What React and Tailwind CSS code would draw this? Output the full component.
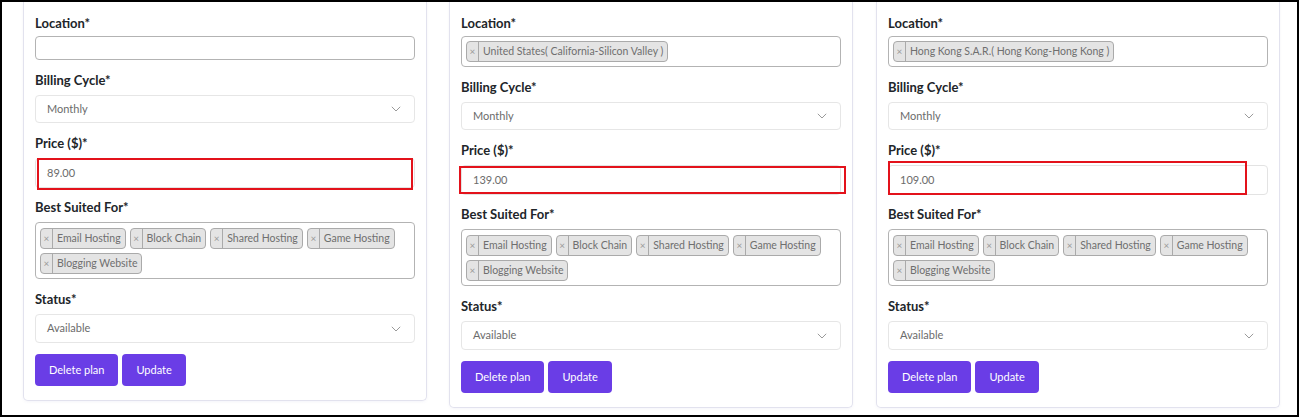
import React from "react";

const FONT = { fontFamily: "Lato, 'Open Sans', sans-serif" };

function Label({ children, tight }) {
  return (
    <div className={`h-[18px] leading-[18px] text-[13px] font-bold text-[#212529] ${tight ? "mb-[4px]" : "mb-[6px]"}`}>
      {children}
    </div>
  );
}

function Tag({ text }) {
  return (
    <span className="inline-flex items-stretch h-[21px] rounded-[4px] border border-[#aaaaaa] bg-[#e4e4e4] text-[10.5px] leading-[19px] text-[#6f6f6f]">
      <span className="flex w-[12px] items-center justify-center border-r border-[#aaaaaa] text-[10px] text-[#9a9a9a]">×</span>
      <span className="flex items-center pl-[4px] pr-[4px] whitespace-nowrap">{text}</span>
    </span>
  );
}

function Chevron() {
  return (
    <svg width="10" height="6" viewBox="0 0 10 6" fill="none" className="shrink-0">
      <path d="M0.8 0.8 L5 5 L9.2 0.8" stroke="#9a9a9a" strokeWidth="1" />
    </svg>
  );
}

function Select({ value, h }) {
  return (
    <div className={`${h} flex items-center justify-between rounded-[4px] border border-[#e6e6e6] bg-white pl-[11px] pr-[13px] text-[11px] text-[#6b6b6b]`}>
      <span>{value}</span>
      <Chevron />
    </div>
  );
}

const SUITED = ["Email Hosting", "Block Chain", "Shared Hosting", "Game Hosting", "Blogging Website"];

function Card({ location, price, redClass }) {
  return (
    <div className="w-[404px] shrink-0 rounded-b-[5px] border-x border-b border-[#e2e2ee] bg-white px-[11px] pt-[12px] pb-[14px] shadow-[0_1px_3px_rgba(120,120,180,0.08)]">
      <div className="mb-[11px]">
        <Label tight>Location*</Label>
        {location ? (
          <div className="flex rounded-[4px] border border-[#b3b3b3] px-[4px] pt-[4px] pb-[4px]">
            <Tag text={location} />
          </div>
        ) : (
          <div className="h-[24px] rounded-[4px] border border-[#b3b3b3]" />
        )}
      </div>
      <div className="mb-[11px]">
        <Label>Billing Cycle*</Label>
        <Select value="Monthly" h="h-[28px]" />
      </div>
      <div className="mb-[10px]">
        <Label>Price ($)*</Label>
        <div className="relative">
          <div className="flex h-[30px] items-center rounded-[4px] border border-[#e3e3e3] pl-[11px] text-[11px] text-[#6b6b6b]">
            {price}
          </div>
          <div className={`pointer-events-none absolute border-2 border-[#e3121b] ${redClass}`} />
        </div>
      </div>
      <div className="mb-[11px]">
        <Label>Best Suited For*</Label>
        <div className="flex flex-wrap gap-x-[4px] gap-y-[4px] rounded-[4px] border border-[#b3b3b3] px-[4px] pt-[5px] pb-[4px]">
          {SUITED.map((s) => (
            <Tag key={s} text={s} />
          ))}
        </div>
      </div>
      <div className="mb-[11px]">
        <Label>Status*</Label>
        <Select value="Available" h="h-[29px]" />
      </div>
      <div className="flex gap-[4px]">
        <button className="h-[32px] rounded-[4px] bg-[#6a3de6] px-[14px] text-[11px] font-normal text-white">Delete plan</button>
        <button className="h-[32px] rounded-[4px] bg-[#6a3de6] px-[14px] text-[11px] font-normal text-white">Update</button>
      </div>
    </div>
  );
}

export default function App() {
  return (
    <div style={FONT} className="box-border h-[417px] w-[1299px] overflow-hidden border-2 border-black bg-white">
      <div className="flex items-start gap-[22px] pl-[21px]">
        <Card location={null} price="89.00" redClass="top-0 -bottom-[2px] left-[2px] right-[2px]" />
        <Card location="United States( California-Silicon Valley )" price="139.00" redClass="top-[1px] bottom-[1px] -left-[2px] -right-[5px]" />
        <div className="ml-[1px]">
          <Card location="Hong Kong S.A.R.( Hong Kong-Hong Kong )" price="109.00" redClass="-top-[4px] bottom-0 left-0 right-[21px]" />
        </div>
      </div>
    </div>
  );
}
